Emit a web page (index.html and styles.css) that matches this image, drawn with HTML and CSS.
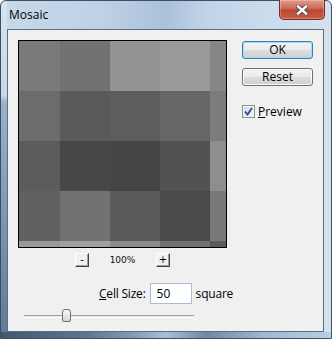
FILE: index.html
```html
<!DOCTYPE html>
<html>
<head>
<meta charset="utf-8">
<link rel="stylesheet" href="styles.css">
</head>
<body>
<div class="window">
  <div class="titlebar">
    <span class="title">Mosaic</span>
    <div class="close">
      <svg width="12" height="10" viewBox="0 0 12 10">
        <path d="M2 1.5 L10 8.5 M10 1.5 L2 8.5" stroke="#4a4a4a" stroke-width="4.2" stroke-linecap="square"/>
        <path d="M2 1.5 L10 8.5 M10 1.5 L2 8.5" stroke="#ffffff" stroke-width="2.4" stroke-linecap="square"/>
      </svg>
    </div>
  </div>
  <div class="client">
    <div class="top">
      <div class="leftcol">
        <div class="preview">
          <div class="cell" style="background:#7a7a7a"></div>
          <div class="cell" style="background:#727272"></div>
          <div class="cell" style="background:#939393"></div>
          <div class="cell" style="background:#9a9a9a"></div>
          <div class="cell" style="background:#868686"></div>
          <div class="cell" style="background:#6c6c6c"></div>
          <div class="cell" style="background:#5a5a5a"></div>
          <div class="cell" style="background:#5d5d5d"></div>
          <div class="cell" style="background:#666666"></div>
          <div class="cell" style="background:#7c7c7c"></div>
          <div class="cell" style="background:#5c5c5c"></div>
          <div class="cell" style="background:#474747"></div>
          <div class="cell" style="background:#454545"></div>
          <div class="cell" style="background:#525252"></div>
          <div class="cell" style="background:#8e8e8e"></div>
          <div class="cell" style="background:#616161"></div>
          <div class="cell" style="background:#727272"></div>
          <div class="cell" style="background:#5a5a5a"></div>
          <div class="cell" style="background:#4a4a4a"></div>
          <div class="cell" style="background:#787878"></div>
          <div class="cell" style="background:#9a9a9a"></div>
          <div class="cell" style="background:#a0a0a0"></div>
          <div class="cell" style="background:#8c8c8c"></div>
          <div class="cell" style="background:#707070"></div>
          <div class="cell" style="background:#5a5a5a"></div>
        </div>
        <div class="zoomrow">
          <div class="zbtn">-</div>
          <span class="zlabel">100%</span>
          <div class="zbtn">+</div>
        </div>
      </div>
      <div class="rightcol">
        <div class="btn default">OK</div>
        <div class="btn">Reset</div>
        <div class="check">
          <span class="box">
            <svg width="9" height="9" viewBox="0 0 9 9">
              <path d="M1 4.5 L3.5 7.5 L8 1" fill="none" stroke="#2a4a9a" stroke-width="1.8"/>
            </svg>
          </span>
          <span class="cklabel"><u>P</u>review</span>
        </div>
      </div>
    </div>
    <div class="cellrow">
      <span class="lbl"><u>C</u>ell Size:</span>
      <span class="input">50</span>
      <span class="lbl">square</span>
    </div>
    <div class="slider">
      <div class="track"></div>
      <div class="thumb"></div>
    </div>
  </div>
</div>
</body>
</html>
```

FILE: styles.css
```css
* { box-sizing: border-box; }
html, body { margin: 0; padding: 0; background: #ffffff; }
body { font-family: "Open Sans", "Noto Sans", sans-serif; font-size: 12px; color: #000; }

.window {
  width: 332px;
  height: 339px;
  border: 1px solid #3f4f62;
  border-radius: 6px 6px 0 0;
  background-color: #c2d4e8;
  background-image:
    linear-gradient(90deg, #41596f 0%, #5a7591 25%, #7f9bb8 40%, #a6c0da 50%, #6e89a6 62%, #9fb9d4 80%, #b9cee3 100%),
    linear-gradient(180deg, #d6e3f0 0%, #c9d9ea 28%, #9ab3cc 30%, #5f7a96 100%),
    linear-gradient(90deg, #c7d8ea 0%, #bfd1e5 30%, #aac1da 50%, #c0d3e8 62%, #cadbec 80%, #d3e1ef 100%);
  background-size: 100% 6px, 6px 100%, 100% 100%;
  background-position: left bottom, left top, left top;
  background-repeat: no-repeat;
  padding: 0 7px 6px 6px;
  display: flex;
  flex-direction: column;
}

.titlebar {
  height: 28px;
  position: relative;
  display: flex;
  align-items: flex-start;
}
.title {
  font-size: 12px;
  margin: 5px 0 0 2px;
  color: #000;
}
.close {
  position: absolute;
  right: -1px;
  top: -1px;
  width: 46px;
  height: 20px;
  border: 1px solid #6b2e28;
  border-top: none;
  border-radius: 0 0 5px 5px;
  background: linear-gradient(180deg, #e29a8a 0%, #cf6e5c 40%, #bd4734 55%, #c65f48 100%);
  display: flex;
  align-items: center;
  justify-content: center;
  box-shadow: inset 0 0 0 1px rgba(255,255,255,0.25);
}

.client {
  flex: 1;
  background: #f0f0f0;
  border: 1px solid #5e6e80;
  padding: 10px 0 0 10px;
  display: flex;
  flex-direction: column;
}

.top { display: flex; }
.leftcol { display: flex; flex-direction: column; }
.preview {
  width: 209px;
  height: 208px;
  border: 1px solid #000;
  display: grid;
  grid-template-columns: 41px 50px 50px 50px 16px;
  grid-template-rows: 50px 50px 50px 50px 6px;
}
.zoomrow {
  display: flex;
  align-items: center;
  height: 14px;
  margin: 5px 0 0 57px;
}
.zbtn {
  width: 14px;
  height: 14px;
  border: 1px solid;
  border-color: #ffffff #404040 #404040 #ffffff;
  background: #f0f0f0;
  box-shadow: inset -1px -1px 0 #a0a0a0;
  font-family: "DejaVu Sans", sans-serif;
  font-size: 10px;
  line-height: 11px;
  text-align: center;
}
.zlabel {
  font-family: "DejaVu Sans", sans-serif;
  font-size: 9px;
  width: 67px;
  text-align: center;
  color: #0a1020;
}

.rightcol {
  margin-left: 15px;
  padding-top: 1px;
  display: flex;
  flex-direction: column;
}
.btn {
  width: 71px;
  height: 18px;
  border: 1px solid #707070;
  border-radius: 3px;
  background: linear-gradient(180deg, #f2f2f2 0%, #ebebeb 50%, #dddddd 51%, #cfcfcf 100%);
  box-shadow: inset 0 0 0 1px #fcfcfc;
  text-align: center;
  line-height: 16px;
  font-size: 12px;
  margin-bottom: 9px;
}
.btn.default {
  border-color: #3c7fb1;
  box-shadow: inset 0 0 0 1px #9fdcf7;
}
.check {
  display: flex;
  align-items: center;
  margin-top: 8px;
}
.box {
  width: 13px;
  height: 13px;
  border: 1px solid #8e8f8f;
  background: linear-gradient(135deg, #cfd8e2, #f6f8fa);
  box-shadow: inset 0 0 0 1px #f4f4f4;
  display: flex;
  align-items: center;
  justify-content: center;
}
.cklabel { margin-left: 3px; font-size: 12px; }

.cellrow {
  display: flex;
  align-items: center;
  margin: 16px 0 0 81px;
  height: 21px;
}
.lbl { letter-spacing: -0.2px; }
.input {
  width: 42px;
  height: 21px;
  border: 1px solid #a5bcd6;
  background: #fff;
  margin: 0 4px 0 4px;
  padding-left: 6px;
  line-height: 19px;
}

.slider {
  position: relative;
  height: 13px;
  margin: 5px 0 0 6px;
  width: 170px;
}
.track {
  margin-top: 6px;
  height: 3px;
  border-top: 1px solid #a0a0a0;
  border-bottom: 1px solid #ffffff;
  background: #e6e6e6;
}
.thumb {
  position: absolute;
  left: 38px;
  top: 0;
  width: 9px;
  height: 13px;
  border: 1px solid #707070;
  border-radius: 3px 3px 2px 2px;
  background: linear-gradient(180deg, #f7f7f7, #d6d6d6);
}
```
